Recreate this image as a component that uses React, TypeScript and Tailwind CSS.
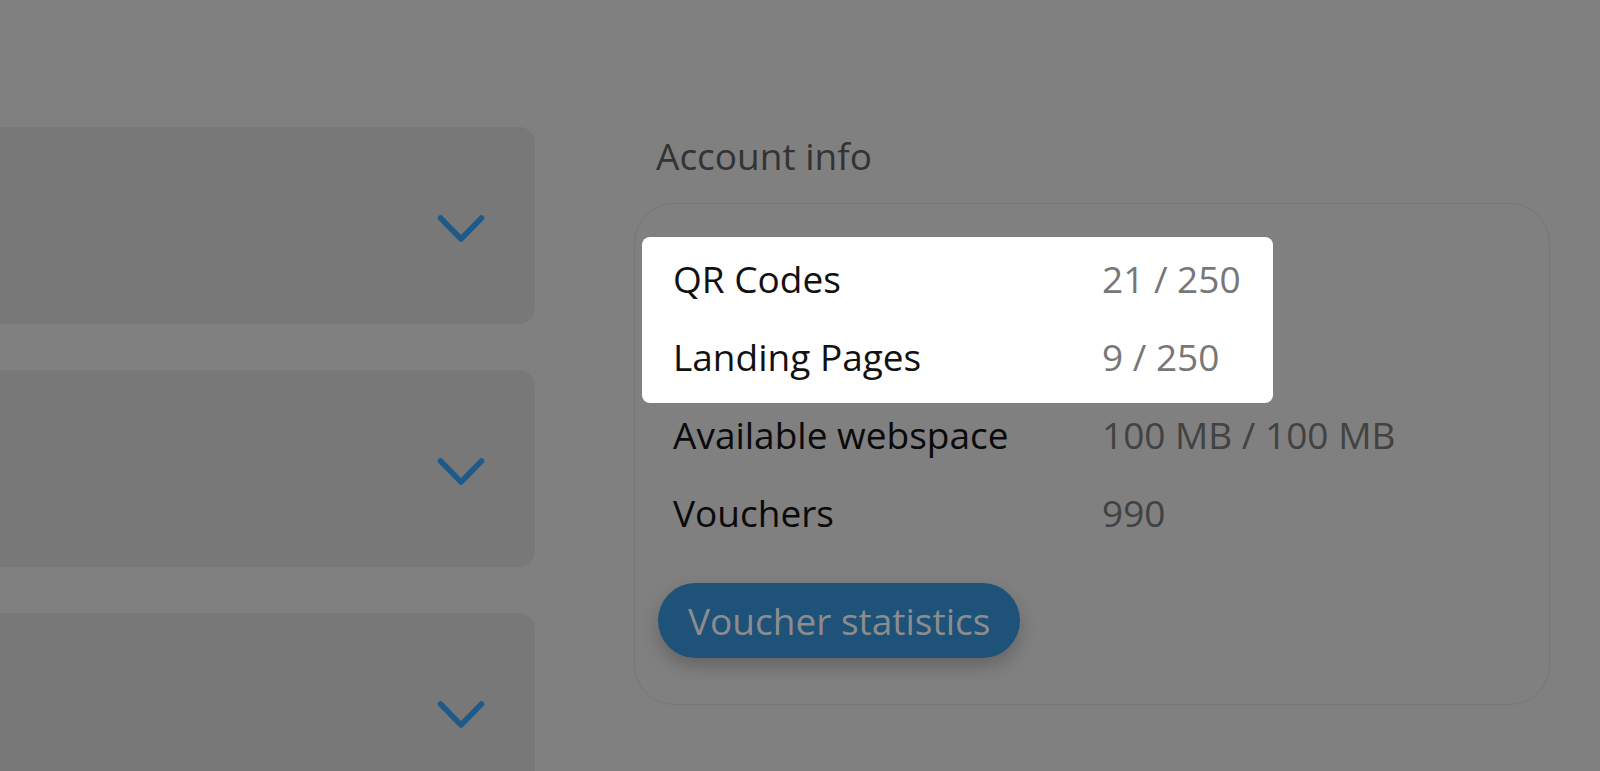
import React from 'react';

const rows = [
  { label: 'QR Codes', value: '21 / 250' },
  { label: 'Landing Pages', value: '9 / 250' },
  { label: 'Available webspace', value: '100 MB / 100 MB' },
  { label: 'Vouchers', value: '990' },
];

function Chevron() {
  return (
    <svg width="52" height="32" viewBox="0 0 52 32" fill="none" className="shrink-0">
      <polyline
        points="5.5,5 26,26 46.5,5"
        stroke="#1d5a8a"
        strokeWidth="5.5"
        strokeLinecap="round"
        strokeLinejoin="round"
      />
    </svg>
  );
}

function CollapsedCard() {
  return (
    <div className="h-[197px] rounded-[16px] bg-[#787878] flex items-center justify-end pr-[48px] pt-[7px]">
      <Chevron />
    </div>
  );
}

function InfoRow({ label, value, highlighted }: { label: string; value: string; highlighted?: boolean }) {
  return (
    <div className="relative grid grid-cols-[429px_1fr] pl-[15px] h-[78px] leading-[78px] text-[37px]">
      <span className={highlighted ? 'text-[#111111]' : 'text-[#0a0a0a]'}>{label}</span>
      <span className={highlighted ? 'text-[#777777]' : 'text-[#424242]'}>{value}</span>
    </div>
  );
}

export default function App() {
  return (
    <div
      className="w-[1600px] h-[771px] overflow-hidden bg-[#808080] flex items-start"
      style={{ fontFamily: '"Open Sans", "Noto Sans", sans-serif' }}
    >
      {/* collapsed sections, left side runs off screen */}
      <div className="-ml-[30px] w-[565px] pt-[127px] flex flex-col gap-[46px] shrink-0">
        <CollapsedCard />
        <CollapsedCard />
        <CollapsedCard />
      </div>

      <div className="ml-[99px] pt-[131px] flex flex-col">
        <h2 className="ml-[22px] text-[37px] leading-[49px] font-normal text-[#333333]">Account info</h2>

        <div className="mt-[23px] w-[916px] rounded-[40px] border border-[#777777] pl-[23px] pt-[36px] pb-[46px]">
          <div className="relative">
            {/* tour spotlight around the first two rows */}
            <div className="absolute -left-[16px] -top-[3px] w-[631px] h-[166px] rounded-[8px] bg-white" />
            <InfoRow label={rows[0].label} value={rows[0].value} highlighted />
            <InfoRow label={rows[1].label} value={rows[1].value} highlighted />
          </div>
          <InfoRow label={rows[2].label} value={rows[2].value} />
          <InfoRow label={rows[3].label} value={rows[3].value} />

          <button
            type="button"
            className="mt-[31px] h-[75px] px-[30px] rounded-full bg-[#1e5279] text-[37px] text-[#8c8c8c] shadow-[0_8px_18px_rgba(0,0,0,0.22)]"
          >
            Voucher statistics
          </button>
        </div>
      </div>
    </div>
  );
}
